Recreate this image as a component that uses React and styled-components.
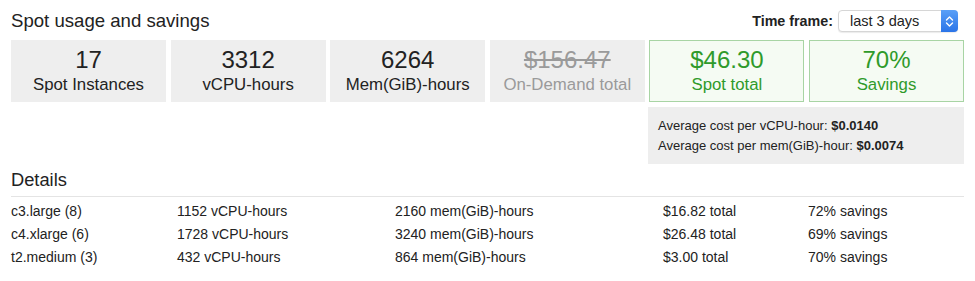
import React from "react";
import styled, { createGlobalStyle } from "styled-components";

const GlobalStyle = createGlobalStyle`
  body {
    margin: 0;
    background: #ffffff;
    font-family: "Liberation Sans", Arial, sans-serif;
    color: #222;
  }
`;

const tiles = [
  { value: "17", label: "Spot Instances" },
  { value: "3312", label: "vCPU-hours" },
  { value: "6264", label: "Mem(GiB)-hours" },
  { value: "$156.47", label: "On-Demand total", muted: true },
  { value: "$46.30", label: "Spot total", good: true },
  { value: "70%", label: "Savings", good: true },
];

const details = [
  ["c3.large (8)", "1152 vCPU-hours", "2160 mem(GiB)-hours", "$16.82 total", "72% savings"],
  ["c4.xlarge (6)", "1728 vCPU-hours", "3240 mem(GiB)-hours", "$26.48 total", "69% savings"],
  ["t2.medium (3)", "432 vCPU-hours", "864 mem(GiB)-hours", "$3.00 total", "70% savings"],
];

const App = () => {
  return (
    <React.Fragment>
      <GlobalStyle />
      <Page>
        <HeaderRow>
          <Title>Spot usage and savings</Title>
          <TimeFrame>
            <TimeLabel>Time frame:</TimeLabel>
            <SelectBox>
              <SelectText>last 3 days</SelectText>
              <SelectButton>
                <svg width="9" height="13" viewBox="0 0 9 13" fill="none">
                  <path d="M1.5 5 L4.5 2 L7.5 5" stroke="#fff" strokeWidth="1.4" strokeLinecap="round" strokeLinejoin="round" />
                  <path d="M1.5 8 L4.5 11 L7.5 8" stroke="#fff" strokeWidth="1.4" strokeLinecap="round" strokeLinejoin="round" />
                </svg>
              </SelectButton>
            </SelectBox>
          </TimeFrame>
        </HeaderRow>

        <TileGrid>
          {tiles.map((t) => (
            <Tile key={t.label} $good={t.good}>
              <TileValue $good={t.good} $muted={t.muted}>
                {t.value}
              </TileValue>
              <TileLabel $good={t.good} $muted={t.muted}>
                {t.label}
              </TileLabel>
            </Tile>
          ))}
        </TileGrid>

        <AverageRow>
          <AverageBox>
            <AverageLine>
              Average cost per vCPU-hour: <b>$0.0140</b>
            </AverageLine>
            <AverageLine>
              Average cost per mem(GiB)-hour: <b>$0.0074</b>
            </AverageLine>
          </AverageBox>
        </AverageRow>

        <SectionTitle>Details</SectionTitle>
        <DetailTable>
          {details.map((row) => (
            <DetailRow key={row[0]}>
              {row.map((cell) => (
                <span key={cell}>{cell}</span>
              ))}
            </DetailRow>
          ))}
        </DetailTable>
      </Page>
    </React.Fragment>
  );
};
export default App;

const Page = styled.div`
  width: 953px;
  padding: 0 11px;
`;

const HeaderRow = styled.div`
  display: flex;
  align-items: center;
  justify-content: space-between;
  height: 32px;
  padding-top: 5px;
  margin-bottom: 3px;
`;

const Title = styled.div`
  font-size: 18.6px;
  color: #222;
`;

const TimeFrame = styled.div`
  display: flex;
  align-items: center;
  gap: 5px;
  padding-right: 6px;
`;

const TimeLabel = styled.span`
  font-size: 14.3px;
  font-weight: bold;
  color: #222;
`;

const SelectBox = styled.div`
  display: flex;
  align-items: center;
  justify-content: space-between;
  width: 120px;
  height: 22px;
  box-sizing: border-box;
  border: 1px solid #d6d6d6;
  border-radius: 4px;
  background: #fff;
  box-shadow: 0 1px 1px rgba(0, 0, 0, 0.08);
`;

const SelectText = styled.span`
  font-size: 14.5px;
  color: #222;
  padding-left: 11px;
`;

const SelectButton = styled.span`
  display: flex;
  align-items: center;
  justify-content: center;
  width: 17px;
  height: 22px;
  margin: -1px -1px -1px 0;
  border-radius: 0 4px 4px 0;
  background: linear-gradient(#5aa0f7, #2a74e8);
`;

const TileGrid = styled.div`
  display: grid;
  grid-template-columns: repeat(6, 1fr);
  column-gap: 4.6px;
`;

const Tile = styled.div`
  height: 62px;
  box-sizing: border-box;
  display: flex;
  flex-direction: column;
  align-items: center;
  justify-content: center;
  background: ${(p) => (p.$good ? "#f5fbf3" : "#eeeeee")};
  border: 1px solid ${(p) => (p.$good ? "#a8d4a4" : "#eeeeee")};
`;

const TileValue = styled.div`
  font-size: 24px;
  line-height: 28px;
  color: ${(p) => (p.$good ? "#2f9a2a" : p.$muted ? "#9a9a9a" : "#222")};
  text-decoration: ${(p) => (p.$muted ? "line-through" : "none")};
`;

const TileLabel = styled.div`
  font-size: 16.8px;
  line-height: 22px;
  color: ${(p) => (p.$good ? "#2f9a2a" : p.$muted ? "#9a9a9a" : "#222")};
`;

const AverageRow = styled.div`
  display: flex;
  justify-content: flex-end;
  margin-top: 5px;
`;

const AverageBox = styled.div`
  width: 316px;
  height: 57px;
  box-sizing: border-box;
  padding: 9px 10px;
  background: #eeeeee;
`;

const AverageLine = styled.div`
  font-size: 13px;
  line-height: 20px;
  color: #222;
`;

const SectionTitle = styled.div`
  font-size: 18.3px;
  line-height: 21px;
  color: #222;
  margin-top: 5px;
  padding-bottom: 6px;
  border-bottom: 1px solid #e4e4e4;
`;

const DetailTable = styled.div`
  display: flex;
  flex-direction: column;
  padding-top: 3px;
`;

const DetailRow = styled.div`
  display: grid;
  grid-template-columns: 166px 218px 268px 145px 1fr;
  font-size: 14px;
  line-height: 23px;
  color: #222;
`;
